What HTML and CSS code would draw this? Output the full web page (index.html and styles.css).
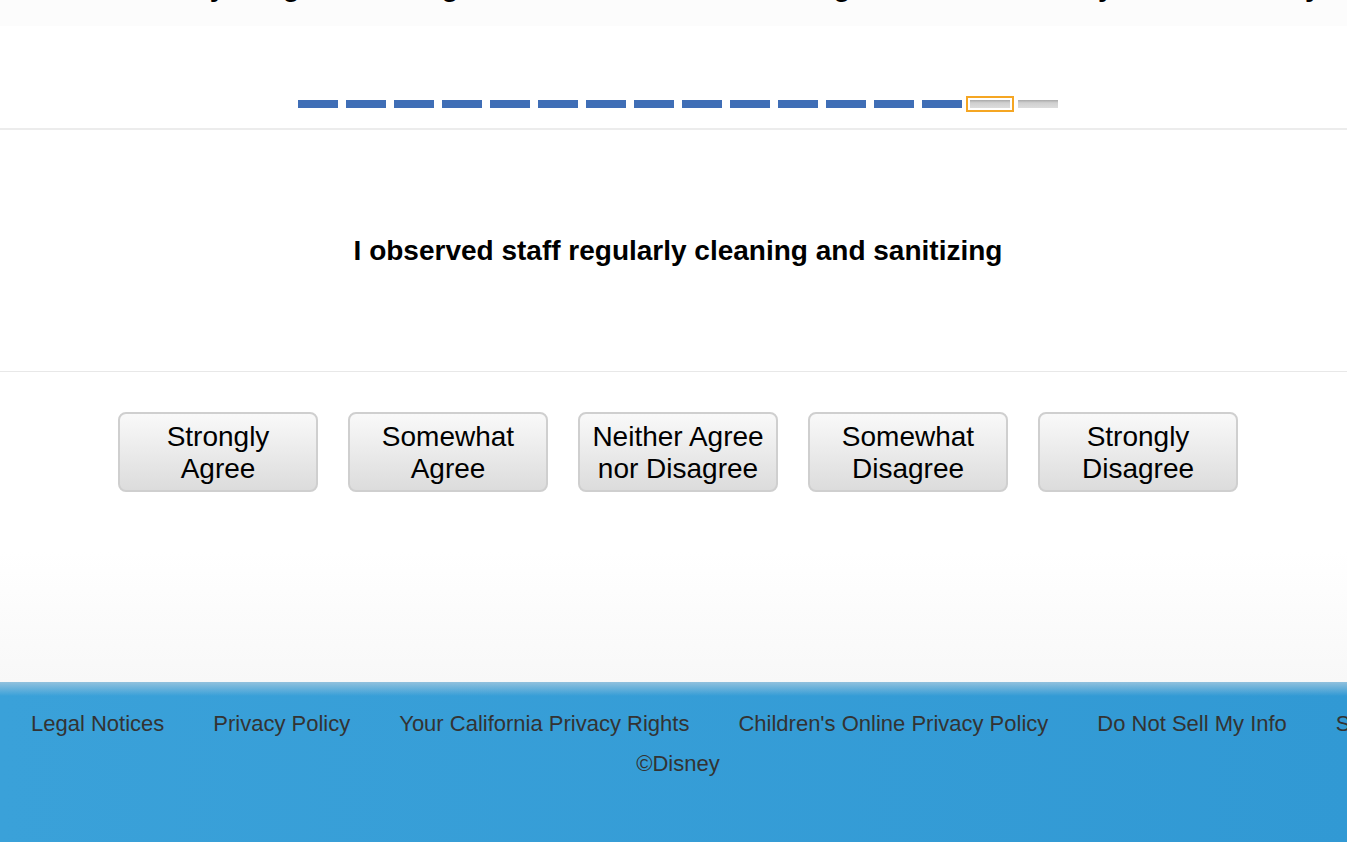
FILE: index.html
```html
<!DOCTYPE html>
<html lang="en">
<head>
<meta charset="UTF-8">
<meta name="viewport" content="width=device-width, initial-scale=1.0">
<title>Guest Survey</title>
<link rel="stylesheet" href="styles.css">
</head>
<body>
    <div class="page">
        <div class="intro">
            <p class="intro-text">How much do you agree or disagree with each of the following statements about your overall stay?</p>
        </div>

        <div class="progress">
            <span class="step done"></span>
            <span class="step done"></span>
            <span class="step done"></span>
            <span class="step done"></span>
            <span class="step done"></span>
            <span class="step done"></span>
            <span class="step done"></span>
            <span class="step done"></span>
            <span class="step done"></span>
            <span class="step done"></span>
            <span class="step done"></span>
            <span class="step done"></span>
            <span class="step done"></span>
            <span class="step done"></span>
            <span class="step current"></span>
            <span class="step"></span>
        </div>

        <div class="question">
            <h1 class="question-text">I observed staff regularly cleaning and sanitizing</h1>
        </div>

        <div class="answers">
            <div class="answer-row">
                <button class="answer">Strongly<br>Agree</button>
                <button class="answer">Somewhat<br>Agree</button>
                <button class="answer">Neither Agree<br>nor Disagree</button>
                <button class="answer">Somewhat<br>Disagree</button>
                <button class="answer">Strongly<br>Disagree</button>
            </div>
        </div>

        <footer class="footer">
            <ul class="footer-links">
                <li><a href="#">Legal Notices</a></li>
                <li><a href="#">Privacy Policy</a></li>
                <li><a href="#">Your California Privacy Rights</a></li>
                <li><a href="#">Children's Online Privacy Policy</a></li>
                <li><a href="#">Do Not Sell My Info</a></li>
                <li><a href="#">Site Map</a></li>
            </ul>
            <p class="copyright">&copy;Disney</p>
        </footer>
    </div>
</body>
</html>
```

FILE: styles.css
```css
html, body {
    margin: 0;
    padding: 0;
    overflow: hidden;
    background: #fff;
}

.page {
    width: 1356px;
    font-family: "Liberation Sans", Arial, sans-serif;
    color: #000;
}

/* tail of the intro text, scrolled mostly out of view */
.intro {
    height: 26px;
    overflow: hidden;
    background: #fcfcfc;
}
.intro-text {
    margin: -29px 0 0 0;
    font-size: 28px;
    font-weight: bold;
    line-height: 32px;
    text-align: center;
    white-space: nowrap;
}

.progress {
    display: flex;
    justify-content: center;
    gap: 8px;
    padding: 74px 0 20px;
    border-bottom: 2px solid #ececec;
}
.step {
    width: 40px;
    height: 8px;
    background: linear-gradient(#a9a9a9 0, #cfcfcf 35%, #dcdcdc 100%);
}
.step.done {
    background: #3f6eb6;
}
.step.current {
    outline: 2px solid #f5a623;
    outline-offset: 2px;
}

.question {
    height: 241px;
    display: flex;
    align-items: center;
    justify-content: center;
    border-bottom: 1px solid #e8e8e8;
}
.question-text {
    margin: 0;
    padding-top: 1px;
    font-size: 28px;
    font-weight: bold;
}

.answers {
    height: 310px;
    background: linear-gradient(#fff 0, #fff 58%, #f8f8f8 100%);
}
.answer-row {
    display: flex;
    justify-content: center;
    gap: 30px;
    padding-top: 40px;
}
.answer {
    box-sizing: border-box;
    width: 200px;
    height: 80px;
    padding: 2px 0 0;
    font-family: "Liberation Sans", Arial, sans-serif;
    font-size: 28px;
    line-height: 32px;
    color: #000;
    background: linear-gradient(#f9f9f9, #dcdcdc);
    border: 2px solid #cfcfcf;
    border-radius: 8px;
}

.footer {
    height: 170px;
    padding-top: 29px;
    box-sizing: border-box;
    background:
        linear-gradient(rgba(150, 195, 222, 0.95) 0, rgba(150, 195, 222, 0) 14px),
        linear-gradient(90deg, #3aa1d9, #3199d4);
}
.footer-links {
    display: flex;
    gap: 49px;
    margin: 0;
    padding: 0 0 0 31px;
    list-style: none;
    white-space: nowrap;
}
.footer-links a {
    color: #333;
    text-decoration: none;
    font-size: 22px;
    line-height: 26px;
}
.copyright {
    margin: 14px 0 0;
    text-align: center;
    font-size: 22px;
    line-height: 26px;
    color: #333;
}
```
